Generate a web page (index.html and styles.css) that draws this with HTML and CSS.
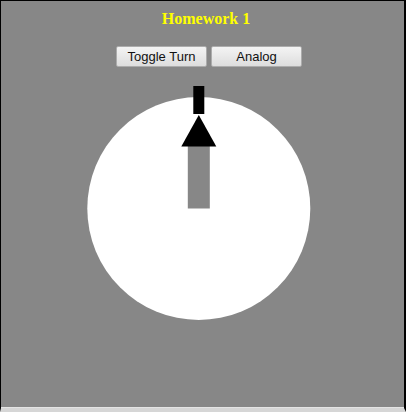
FILE: index.html
```html
<!DOCTYPE html>
<html>
<head>
<meta charset="utf-8">
<link rel="stylesheet" href="styles.css">
</head>
<body>
<div class="frame">
  <div class="title">Homework 1</div>
  <div class="controls">
    <button class="btn">Toggle Turn</button>
    <button class="btn">Analog</button>
  </div>
  <svg class="dial" width="403" height="330" viewBox="0 0 403 330">
    <circle cx="197.8" cy="136.5" r="111.5" fill="#ffffff"/>
    <rect x="186.8" y="74" width="22" height="62.5" fill="#878787"/>
    <polygon points="197.8,43 180.3,74.5 215.3,74.5" fill="#000000"/>
    <rect x="192.3" y="14" width="11" height="28" fill="#000000"/>
  </svg>
</div>
</body>
</html>
```
FILE: styles.css
```css
html, body {
  margin: 0;
  padding: 0;
  background: #878787;
}
.frame {
  box-sizing: border-box;
  width: 406px;
  height: 412px;
  overflow: hidden;
  background: #878787;
  border-top: 1px solid #000;
  border-left: 1px solid #000;
  border-right: 2px solid #000;
  border-bottom: 4px solid #d6d6d6;
  box-shadow: inset 0 -1px 0 #e4e4e4;
}
.title {
  padding-top: 8px;
  padding-left: 7px;
  font-family: "Liberation Serif", "Times New Roman", serif;
  font-weight: bold;
  font-size: 16px;
  line-height: 19px;
  color: #ffff00;
  text-align: center;
}
.controls {
  display: flex;
  justify-content: center;
  gap: 4px;
  margin-top: 18px;
  padding-left: 13px;
}
.btn {
  box-sizing: border-box;
  width: 91px;
  height: 21px;
  margin: 0;
  padding: 0;
  font-family: "Liberation Sans", Arial, sans-serif;
  font-size: 13px;
  color: #111;
  background: linear-gradient(#f4f4f4, #dddddd);
  border: 1px solid #acacac;
  border-radius: 2px;
}
.dial {
  display: block;
  margin-top: 5px;
}
```
